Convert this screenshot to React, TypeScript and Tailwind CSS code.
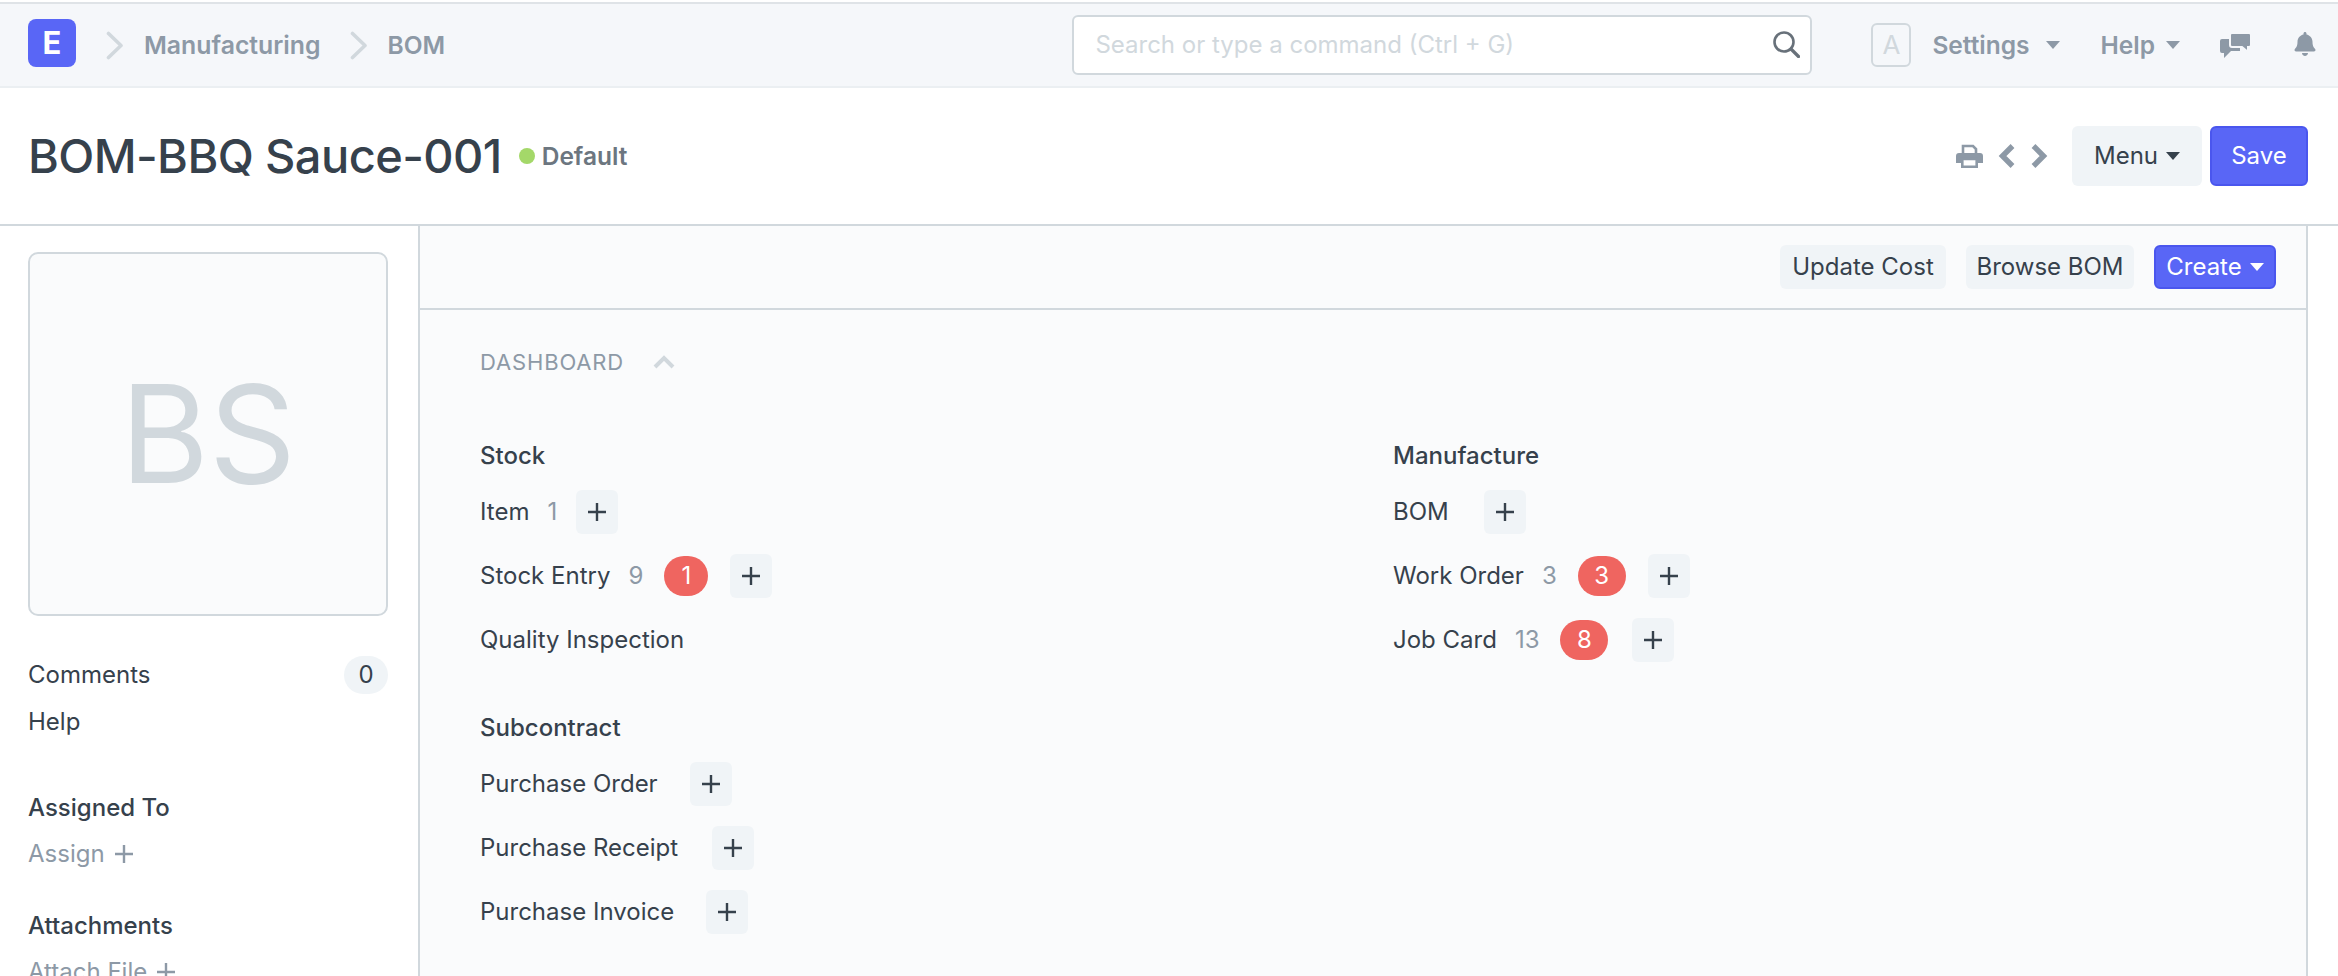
import { FaBell } from 'react-icons/fa';

const font = "font-['Inter',sans-serif]";

function Caret({ className }: { className: string }) {
    return <span className={`inline-block h-0 w-0 border-x-[7.5px] border-t-[8px] border-x-transparent ${className}`} />;
}

function Crumb() {
    return (
        <svg width="18" height="29" viewBox="0 0 18 29" fill="none" stroke="#d1d8dd" strokeWidth="3.6" strokeLinecap="round" strokeLinejoin="round">
            <path d="M2.5 2.5 L15 14.5 L2.5 26.5" />
        </svg>
    );
}

function Plus({ size = 18, stroke = '#36414c' }: { size?: number; stroke?: string }) {
    return (
        <svg width={size} height={size} viewBox="0 0 18 18" stroke={stroke} strokeWidth="2.4">
            <path d="M9 0 V18 M0 9 H18" />
        </svg>
    );
}

function ChatIcon() {
    return (
        <svg className="ml-[40px]" width="31" height="25" viewBox="0 0 31 25" fill="#8d99a6">
            <path d="M2 6 H20 V18 H11 L4 25 V20 H2 A2 2 0 0 1 0 18 V8 A2 2 0 0 1 2 6 Z" />
            <path d="M12 0 H29 A2 2 0 0 1 31 2 V12 A2 2 0 0 1 29 14 H28 V19 L22 14 H12 A2 2 0 0 1 10 12 V2 A2 2 0 0 1 12 0 Z" stroke="#f5f7fa" strokeWidth="2" />
        </svg>
    );
}

function PrintIcon() {
    return (
        <svg className="ml-auto" width="27" height="24" viewBox="0 0 27 24">
            <path d="M7 10 V2 H17 L20 5 V10" fill="none" stroke="#8d99a6" strokeWidth="2.6" />
            <path d="M3 9 H24 A3 3 0 0 1 27 12 V19 H22 V15 H5 V19 H0 V12 A3 3 0 0 1 3 9 Z" fill="#8d99a6" />
            <path d="M6.3 15 H20.7 V22.7 H6.3 Z" fill="none" stroke="#8d99a6" strokeWidth="2.6" />
        </svg>
    );
}

function Chevron({ dir, className }: { dir: 'left' | 'right'; className: string }) {
    return (
        <svg className={className} width="17" height="24" viewBox="0 0 17 24" fill="none" stroke="#8d99a6" strokeWidth="5.4">
            <path d={dir === 'left' ? 'M14.5 2 L4.5 12 L14.5 22' : 'M2.5 2 L12.5 12 L2.5 22'} />
        </svg>
    );
}

function AddButton({ className = '' }: { className?: string }) {
    return (
        <button className={`flex h-11 w-[42px] items-center justify-center rounded-[6px] bg-[#f0f4f7] ${className}`}>
            <Plus />
        </button>
    );
}

interface LinkRow {
    name: string;
    count?: number;
    open?: number;
    add?: boolean;
    gap?: string;
}

function Row({ name, count, open, add = true, gap = 'ml-[19px]' }: LinkRow) {
    return (
        <div className="mb-5 flex h-11 items-center text-[24px] text-[#36414c]">
            <span>{name}</span>
            {count !== undefined && <span className="ml-[18px] text-[#8d99a6]">{count}</span>}
            {open !== undefined && (
                <span className={`ml-[21px] flex h-10 items-center justify-center rounded-[20px] bg-[#ef6560] text-white ${open === 1 ? 'w-11' : 'w-12'}`}>
                    {open}
                </span>
            )}
            {add && <AddButton className={gap} />}
        </div>
    );
}

function Section({ title, rows, className = '' }: { title: string; rows: LinkRow[]; className?: string }) {
    return (
        <div className={className}>
            <div className="mb-[17px] flex h-[34px] items-center text-[24px] font-medium text-[#36414c]">{title}</div>
            {rows.map(r => (
                <Row key={r.name} {...r} />
            ))}
        </div>
    );
}

function Navbar() {
    return (
        <div className="flex h-[86px] items-center border-t-2 border-b-2 border-t-[#dfe3e7] border-b-[#ebeff2] bg-[#f5f7fa] pr-[21px]">
            <div className="mb-1 ml-7 flex h-12 w-12 items-center justify-center rounded-[8px] bg-[#5966f6] text-[31px] font-bold text-white">E</div>
            <div className="ml-[30px]"><Crumb /></div>
            <span className="ml-[20px] text-[24.8px] font-semibold text-[#8d99a6]">Manufacturing</span>
            <div className="ml-[29px]"><Crumb /></div>
            <span className="ml-[20px] text-[24.5px] font-semibold text-[#8d99a6]">BOM</span>

            <div className="mb-[1px] ml-auto flex h-[60px] w-[740px] items-center justify-between rounded-[6px] border-2 border-[#d1d8dd] bg-white pl-[21px] pr-[10px]">
                <span className="text-[24px] text-[#d1d8dd]">Search or type a command (Ctrl + G)</span>
                <svg width="27" height="27" viewBox="0 0 27 27" fill="none" stroke="#68717a" strokeWidth="2.6" strokeLinecap="round">
                    <circle cx="11" cy="11" r="9.5" />
                    <path d="M18 18 L25.5 25.5" strokeWidth="3.2" />
                </svg>
            </div>

            <div className="mb-[1px] ml-[59px] flex h-[44px] w-10 items-center justify-center rounded-[6px] border-2 border-[#d1d8dd] text-[26px] text-[#d1d8dd]">A</div>
            <span className="ml-[21px] text-[24.5px] font-semibold text-[#8d99a6]">Settings</span>
            <Caret className="ml-4 border-t-[#8d99a6]" />
            <span className="ml-[41px] text-[24.5px] font-semibold text-[#8d99a6]">Help</span>
            <Caret className="ml-[11px] border-t-[#8d99a6]" />
            <ChatIcon />
            <FaBell className="mb-[3px] ml-[42px] text-[#8d99a6]" size={24} />
        </div>
    );
}

function PageHead() {
    return (
        <div className="flex h-[138px] items-center border-b-2 border-[#d1d8dd] bg-white pl-7 pr-[30px]">
            <h1 className="text-[47px] font-medium tracking-[-0.6px] text-[#36414c]">BOM-BBQ Sauce-001</h1>
            <span className="ml-[17px] h-4 w-4 rounded-full bg-[#a4d869]" />
            <span className="ml-[7px] text-[24.5px] font-semibold text-[#6c7680]">Default</span>

            <PrintIcon />
            <Chevron dir="left" className="ml-[15px]" />
            <Chevron dir="right" className="ml-[16px]" />
            <button className="ml-6 flex h-[60px] w-[130px] items-center justify-center rounded-[6px] bg-[#f0f4f7] text-[24px] text-[#36414c]">
                Menu
                <Caret className="ml-2 border-t-[#36414c]" />
            </button>
            <button className="ml-2 h-[60px] w-[98px] rounded-[6px] border-2 border-[#4a56ee] bg-[#5966f6] text-[24px] text-white">Save</button>
        </div>
    );
}

function Sidebar() {
    return (
        <div className="w-[418px] shrink-0 pl-7 pr-[30px] pt-[26px]">
            <div className="flex h-[364px] w-[360px] items-center justify-center rounded-[10px] border-2 border-[#d1d8dd] bg-[#fafbfc] text-[136px] text-[#d1d8dd]">BS</div>
            <div className="mt-10 flex h-[38px] items-center justify-between text-[24px] text-[#36414c]">
                <span>Comments</span>
                <span className="flex h-[38px] w-11 items-center justify-center rounded-full bg-[#f0f4f7]">0</span>
            </div>
            <div className="mt-[11px] text-[24px] text-[#36414c]">Help</div>
            <div className="mt-[52px] text-[24px] font-medium text-[#36414c]">Assigned To</div>
            <div className="mt-3 flex items-center gap-[10px] text-[24px] text-[#8d99a6]">
                Assign <Plus stroke="#8d99a6" />
            </div>
            <div className="mt-[38px] text-[24px] font-medium text-[#36414c]">Attachments</div>
            <div className="mt-3 flex items-center gap-[10px] text-[24px] text-[#8d99a6]">
                Attach File <Plus stroke="#8d99a6" />
            </div>
        </div>
    );
}

function Content() {
    return (
        <div className="min-w-0 flex-1 border-x-2 border-[#d1d8dd] bg-[#fafbfc]">
            <div className="flex h-[84px] items-center justify-end gap-5 border-b-2 border-[#d1d8dd] pr-[30px]">
                <button className="h-11 w-[166px] rounded-[6px] bg-[#f0f4f7] text-[24px] text-[#36414c]">Update Cost</button>
                <button className="h-11 w-[168px] rounded-[6px] bg-[#f0f4f7] text-[24px] text-[#36414c]">Browse BOM</button>
                <button className="flex h-11 w-[122px] items-center justify-center rounded-[6px] border-2 border-[#4a56ee] bg-[#5966f6] text-[24px] text-white">
                    Create
                    <Caret className="ml-2 border-t-white" />
                </button>
            </div>
            <div className="pl-[60px] pt-[35px]">
                <div className="flex h-[34px] items-center text-[22px] tracking-[0.85px] text-[#8d99a6]">
                    DASHBOARD
                    <svg className="ml-[29px]" width="22" height="14" viewBox="0 0 22 14" fill="none" stroke="#d1d8dd" strokeWidth="4">
                        <path d="M2 12 L11 3 L20 12" />
                    </svg>
                </div>
                <div className="mt-[60px] flex">
                    <div className="w-[913px]">
                        <Section
                            title="Stock"
                            rows={[
                                { name: 'Item', count: 1 },
                                { name: 'Stock Entry', count: 9, open: 1, gap: 'ml-[22px]' },
                                { name: 'Quality Inspection', add: false },
                            ]}
                        />
                        <Section
                            className="mt-[49px]"
                            title="Subcontract"
                            rows={[
                                { name: 'Purchase Order', gap: 'ml-[32px]' },
                                { name: 'Purchase Receipt', gap: 'ml-[34px]' },
                                { name: 'Purchase Invoice', gap: 'ml-[32px]' },
                            ]}
                        />
                    </div>
                    <Section
                        title="Manufacture"
                        rows={[
                            { name: 'BOM', gap: 'ml-[35px]' },
                            { name: 'Work Order', count: 3, open: 3, gap: 'ml-[22px]' },
                            { name: 'Job Card', count: 13, open: 8, gap: 'ml-[24px]' },
                        ]}
                    />
                </div>
            </div>
        </div>
    );
}

export default function App() {
    return (
        <div className={`h-[976px] overflow-hidden bg-white pt-[2px] leading-[34px] ${font}`}>
            <Navbar />
            <PageHead />
            <div className="flex h-[750px] pr-[30px]">
                <Sidebar />
                <Content />
            </div>
        </div>
    );
}
